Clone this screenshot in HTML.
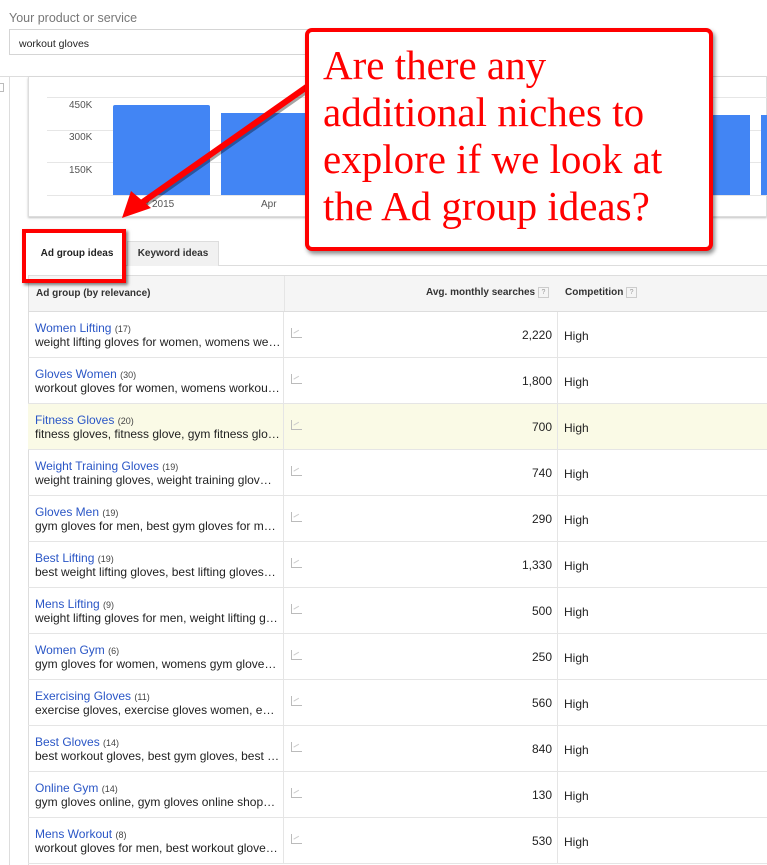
<!DOCTYPE html>
<html><head><style>
*{margin:0;padding:0;box-sizing:border-box}
body{width:767px;height:865px;overflow:hidden;background:#fff;font-family:"Liberation Sans",Arial,sans-serif;position:relative;font-size:12px;color:#222}
.abs{position:absolute}
.row{position:absolute;left:28px;width:739px;height:46px;border-bottom:1px solid #e5e5e5}
.c1{position:absolute;left:7px;top:10px;line-height:13px;white-space:nowrap}
.c1 a{color:#2a56c6;text-decoration:none;font-size:12px}
.c1 small{font-size:9px;color:#444}
.c1 div{font-size:12px;color:#222}
.ic{position:absolute;left:263px;top:16px;width:11px;height:10px;border-left:1px solid #bbb;border-bottom:1px solid #bbb}
.ic:after{content:"";position:absolute;left:2px;top:3px;width:6px;height:3px;border-top:1px solid #ccc;transform:rotate(-30deg)}
.num{position:absolute;right:215px;top:16px;font-size:12px;color:#222}
.hi{position:absolute;left:536px;top:17px;font-size:12px;color:#222}
.v1,.v2{position:absolute;top:0;bottom:0;width:1px;background:#e5e5e5}
.v1{left:255px}.v2{left:529px}
</style></head><body>
<div class="abs" style="left:9px;top:11px;font-size:12.5px;color:#777">Your product or service</div>
<div class="abs" style="left:9px;top:29px;width:320px;height:26px;border:1px solid #d5d5d5;font-size:10.5px;color:#222;padding:8px 9px">workout gloves</div>
<div class="abs" style="left:0;top:76px;width:767px;height:1px;background:#ddd"></div>
<div class="abs" style="left:9px;top:77px;width:1px;height:788px;background:#ddd"></div>
<div class="abs" style="left:0;top:83px;width:4px;height:9px;border:1px solid #bbb;border-left:none"></div>
<div class="abs" style="left:28px;top:77px;width:739px;height:140px;border:1px solid #ddd;border-top:none;box-shadow:0 1px 2px rgba(0,0,0,.25)"></div>
<div class="abs" style="left:47px;top:97px;width:720px;height:1px;background:#e6e6e6"></div>
<div class="abs" style="left:47px;top:130px;width:720px;height:1px;background:#e6e6e6"></div>
<div class="abs" style="left:47px;top:162px;width:720px;height:1px;background:#e6e6e6"></div>
<div class="abs" style="left:47px;top:195px;width:720px;height:1px;background:#e6e6e6"></div>
<div class="abs" style="left:69px;top:100px;font-size:10px;color:#555">450K</div>
<div class="abs" style="left:69px;top:132px;font-size:10px;color:#555">300K</div>
<div class="abs" style="left:69px;top:165px;font-size:10px;color:#555">150K</div>
<div class="abs" style="left:113px;top:105px;width:97px;height:90px;background:#4285f4;border-radius:2px 2px 0 0"></div>
<div class="abs" style="left:221px;top:113px;width:90px;height:82px;background:#4285f4"></div>
<div class="abs" style="left:712px;top:115px;width:38px;height:80px;background:#4285f4"></div>
<div class="abs" style="left:761px;top:115px;width:6px;height:80px;background:#4285f4"></div>
<div class="abs" style="left:132px;top:199px;font-size:10px;color:#555">Mar 2015</div>
<div class="abs" style="left:261px;top:199px;font-size:10px;color:#555">Apr</div>
<div class="abs" style="left:28px;top:265px;width:739px;height:1px;background:#ddd"></div>
<div class="abs" style="left:127px;top:241px;width:92px;height:25px;background:#f1f1f1;border:1px solid #ddd;border-bottom:none;font-size:10px;font-weight:bold;color:#333;text-align:center;line-height:24px">Keyword ideas</div>
<div class="abs" style="left:28px;top:241px;width:98px;height:25px;background:#fff;font-size:10px;font-weight:bold;color:#222;text-align:center;line-height:26px">Ad group ideas</div>
<div class="abs" style="left:28px;top:275px;width:739px;height:37px;background:#f5f5f5;border-top:1px solid #ddd;border-left:1px solid #ddd;border-bottom:1px solid #ddd">
<div class="abs" style="left:255px;top:0;bottom:0;width:1px;background:#e5e5e5"></div>
<div class="abs" style="left:7px;top:12px;font-size:10px;font-weight:bold;color:#333">Ad group (by relevance)</div>
<div class="abs" style="left:397px;top:11px;font-size:10px;font-weight:bold;color:#333">Avg. monthly searches <span style="display:inline-block;width:11px;height:11px;border:1px solid #ccc;font-size:7px;text-align:center;line-height:9px;color:#999;font-weight:normal;vertical-align:middle">?</span></div>
<div class="abs" style="left:536px;top:11px;font-size:10px;font-weight:bold;color:#333">Competition <span style="display:inline-block;width:11px;height:11px;border:1px solid #ccc;font-size:7px;text-align:center;line-height:9px;color:#999;font-weight:normal;vertical-align:middle">?</span></div>
</div>
<div class="abs" style="left:28px;top:312px;width:1px;height:553px;background:#ddd"></div>

<div class="row" style="top:312px"><div class="v1"></div><div class="v2"></div><div class="c1"><a>Women Lifting</a> <small>(17)</small><div>weight lifting gloves for women, womens we…</div></div><div class="ic"></div><div class="num">2,220</div><div class="hi">High</div></div>
<div class="row" style="top:358px"><div class="v1"></div><div class="v2"></div><div class="c1"><a>Gloves Women</a> <small>(30)</small><div>workout gloves for women, womens workou…</div></div><div class="ic"></div><div class="num">1,800</div><div class="hi">High</div></div>
<div class="row" style="top:404px;background:#fafae6"><div class="v1"></div><div class="v2"></div><div class="c1"><a>Fitness Gloves</a> <small>(20)</small><div>fitness gloves, fitness glove, gym fitness glo…</div></div><div class="ic"></div><div class="num">700</div><div class="hi">High</div></div>
<div class="row" style="top:450px"><div class="v1"></div><div class="v2"></div><div class="c1"><a>Weight Training Gloves</a> <small>(19)</small><div>weight training gloves, weight training glov…</div></div><div class="ic"></div><div class="num">740</div><div class="hi">High</div></div>
<div class="row" style="top:496px"><div class="v1"></div><div class="v2"></div><div class="c1"><a>Gloves Men</a> <small>(19)</small><div>gym gloves for men, best gym gloves for m…</div></div><div class="ic"></div><div class="num">290</div><div class="hi">High</div></div>
<div class="row" style="top:542px"><div class="v1"></div><div class="v2"></div><div class="c1"><a>Best Lifting</a> <small>(19)</small><div>best weight lifting gloves, best lifting gloves…</div></div><div class="ic"></div><div class="num">1,330</div><div class="hi">High</div></div>
<div class="row" style="top:588px"><div class="v1"></div><div class="v2"></div><div class="c1"><a>Mens Lifting</a> <small>(9)</small><div>weight lifting gloves for men, weight lifting g…</div></div><div class="ic"></div><div class="num">500</div><div class="hi">High</div></div>
<div class="row" style="top:634px"><div class="v1"></div><div class="v2"></div><div class="c1"><a>Women Gym</a> <small>(6)</small><div>gym gloves for women, womens gym glove…</div></div><div class="ic"></div><div class="num">250</div><div class="hi">High</div></div>
<div class="row" style="top:680px"><div class="v1"></div><div class="v2"></div><div class="c1"><a>Exercising Gloves</a> <small>(11)</small><div>exercise gloves, exercise gloves women, e…</div></div><div class="ic"></div><div class="num">560</div><div class="hi">High</div></div>
<div class="row" style="top:726px"><div class="v1"></div><div class="v2"></div><div class="c1"><a>Best Gloves</a> <small>(14)</small><div>best workout gloves, best gym gloves, best …</div></div><div class="ic"></div><div class="num">840</div><div class="hi">High</div></div>
<div class="row" style="top:772px"><div class="v1"></div><div class="v2"></div><div class="c1"><a>Online Gym</a> <small>(14)</small><div>gym gloves online, gym gloves online shop…</div></div><div class="ic"></div><div class="num">130</div><div class="hi">High</div></div>
<div class="row" style="top:818px"><div class="v1"></div><div class="v2"></div><div class="c1"><a>Mens Workout</a> <small>(8)</small><div>workout gloves for men, best workout glove…</div></div><div class="ic"></div><div class="num">530</div><div class="hi">High</div></div>

<div class="abs" style="left:22px;top:229px;width:104px;height:54px;border:4px solid #f00;box-shadow:2px 2px 3px rgba(0,0,0,.5)"></div>
<svg class="abs" style="left:0;top:0" width="767" height="865">
<line x1="310" y1="88" x2="142" y2="206" stroke="#000" stroke-width="6" opacity=".35"/>
<line x1="308" y1="86" x2="140" y2="204" stroke="#f00" stroke-width="6" stroke-linecap="round"/>
<polygon points="122,218 131,191 151,208" fill="#f00"/>
</svg>
<div class="abs" style="left:305px;top:28px;width:408px;height:223px;border:4px solid #f00;border-radius:7px;background:#fff;box-shadow:2px 3px 4px rgba(0,0,0,.45);color:#f00;font-family:'Liberation Serif',serif;font-size:41px;line-height:47px;padding:10px 0 0 14px;white-space:nowrap">Are there any<br>additional niches to<br>explore if we look at<br>the Ad group ideas?</div>
</body></html>
